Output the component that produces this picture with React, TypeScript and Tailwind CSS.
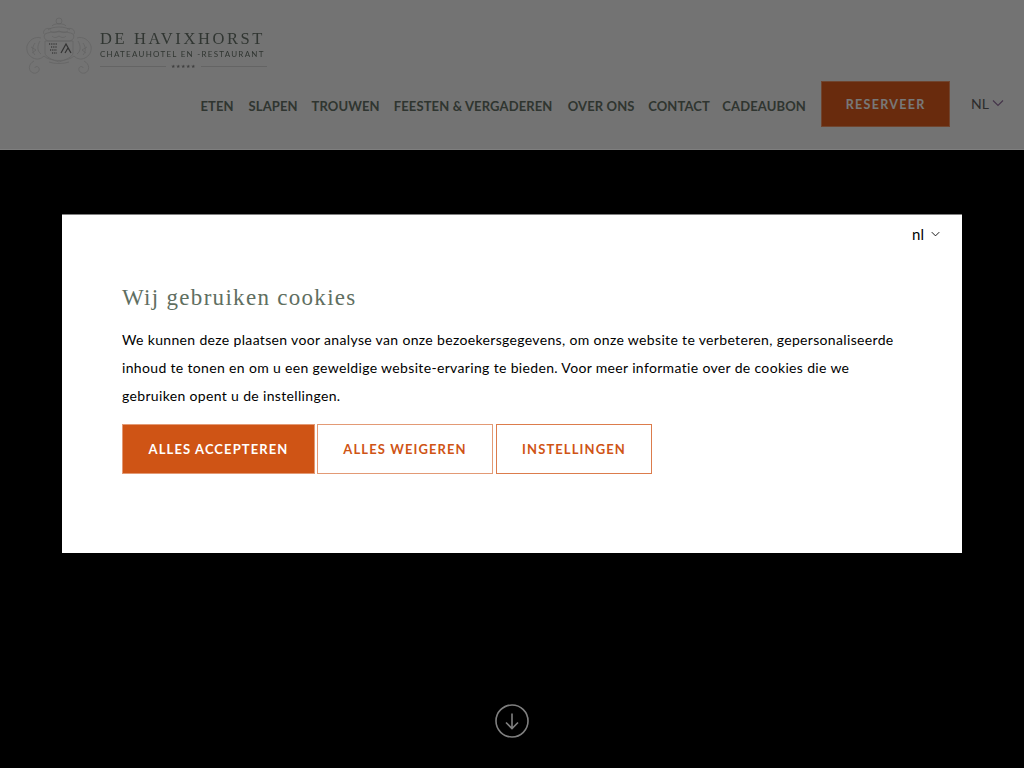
const navItems = [
  { label: 'ETEN', width: 'w-[32px]' },
  { label: 'SLAPEN', width: 'w-[48px]' },
  { label: 'TROUWEN', width: 'w-[65px]' },
  { label: 'FEESTEN & VERGADEREN', width: 'w-[158px]' },
  { label: 'OVER ONS', width: 'w-[66px]' },
  { label: 'CONTACT', width: 'w-[58px]' },
  { label: 'CADEAUBON', width: 'w-[80px]' },
]

function Crest() {
  return (
    <svg width="70" height="58" viewBox="0 0 70 58" fill="none" stroke="#c4c4c4" strokeWidth="0.7" className="shrink-0">
      <circle cx="34" cy="4" r="3" />
      <path d="M27 9c2-3 12-3 14 0M23 13c4-4 18-4 22 0M19 17c-2-4 3-7 7-5M49 17c2-4-3-7-7-5" />
      <path d="M20 17c5-3 23-3 28 0 2 3 0 6-3 7H23c-3-1-5-4-3-7z" />
      <path d="M25 14c3 2 5 2 9 0 4 2 6 2 9 0M27 19c2 2 4 2 7 0 3 2 5 2 7 0" />
      <path d="M16 21c-6-2-12 2-14 8-1 6 2 10 6 12 4 2 8 1 11-2" />
      <path d="M52 21c6-2 12 2 14 8 1 6-2 10-6 12-4 2-8 1-11-2" />
      <path d="M10 26c-3 4-3 9 0 12M58 26c3 4 3 9 0 12M15 24c-3 5-3 10 1 13M53 24c3 5 3 10-1 13M6 30l5 3-4 3M62 30l-5 3 4 3" />
      <path d="M19 39c6 6 24 6 30 0M24 45c5 2 15 2 20 0" />
      <path d="M9 44c-6 3-6 10-1 12 4 1 7-2 6-5-1-2-4-2-4 0" />
      <path d="M59 44c6 3 6 10 1 12-4 1-7-2-6-5 1-2 4-2 4 0" />
      <path d="M20 24h28v12c0 4-8 7-14 9-6-2-14-5-14-9z" />
      <path d="M24 27h8M26 30h6M25 33h7M27 36h5" stroke="#7a7a7a" strokeWidth="1.4" strokeDasharray="1.2 1" />
      <path d="M36 36l5-9 5 9M40 36l3-5 3 5" stroke="#666666" strokeWidth="1.2" />
    </svg>
  )
}

function Logo() {
  return (
    <div className="flex items-start gap-[5px]">
      <Crest />
      <div className="flex w-[167px] flex-col pt-[14px] blur-[0.3px]">
        <span className="whitespace-nowrap font-['Liberation_Serif',serif] text-[16.5px] leading-[16px] tracking-[2.6px] text-[#626c64]">
          DE HAVIXHORST
        </span>
        <span className="mt-[2px] whitespace-nowrap font-['Lato',sans-serif] text-[8px] leading-[11px] tracking-[1.26px] text-[#626c64]">
          CHATEAUHOTEL EN -RESTAURANT
        </span>
        <div className="mt-[2px] flex items-center gap-[5px]">
          <div className="h-px flex-1 bg-[#c8c8c8]" />
          <span className="text-[5px] leading-[8px] tracking-[0.9px] text-[#808080]">★★★★★</span>
          <div className="h-px flex-1 bg-[#c8c8c8]" />
        </div>
      </div>
    </div>
  )
}

function Chevron({ className }: { className: string }) {
  return (
    <svg viewBox="0 0 12 8" fill="none" stroke="currentColor" strokeWidth="1.2" className={className}>
      <path d="M1 1.5l5 5 5-5" />
    </svg>
  )
}

export default function App() {
  return (
    <div className="relative flex h-[768px] w-[1024px] flex-col overflow-hidden bg-black font-['Lato',sans-serif]">
      <header className="flex h-[150px] shrink-0 flex-col border-b border-white bg-[#e6e6e6] pl-[25px] pr-[20px] pt-[17px]">
        <Logo />
        <nav className="mt-[6px] flex items-center justify-end">
          <div className="mt-[3px] flex items-center gap-[16px]">
            {navItems.map((item) => (
              <a
                key={item.label}
                className={`${item.width} flex justify-center whitespace-nowrap text-[13px] font-bold leading-[20px] tracking-[0.12px] text-[#5f6b60]`}
              >
                {item.label}
              </a>
            ))}
          </div>
          <a className="ml-[17px] flex h-[46px] w-[129px] items-center justify-center border border-[#e08a5e] bg-[#d2561a] pt-[2px] text-[12.5px] font-bold tracking-[1.3px] text-[#f0f0f0]">
            RESERVEER
          </a>
          <div className="ml-[21px] flex items-center gap-[3px] text-[#585858]">
            <span className="text-[14px] leading-[20px]">NL</span>
            <Chevron className="mb-[2px] h-[8px] w-[12px] text-[#8a6a94]" />
          </div>
        </nav>
      </header>

      <main className="flex flex-1 items-end justify-center pb-[30px]">
        <svg width="34" height="34" viewBox="0 0 34 34" fill="none" stroke="white" strokeWidth="1.6">
          <circle cx="17" cy="17" r="16" />
          <path d="M17 9.5v15M11 18.5l6 6 6-6" />
        </svg>
      </main>

      <div className="absolute inset-0 flex items-center justify-center bg-black/50">
        <section className="mt-[-1px] flex h-[339px] w-[900px] flex-col border-t border-[#808080] bg-white px-[60px]">
          <div className="mr-[-38px] flex items-center justify-end gap-[6px] pt-[9px] text-black">
            <span className="pr-px text-[15px] leading-[20px]">nl</span>
            <Chevron className="h-[6px] w-[9px]" />
          </div>
          <h2 className="mt-[39px] font-['Liberation_Serif',serif] text-[23px] leading-[30px] tracking-[1.3px] text-[#5f6f61]">
            Wij gebruiken cookies
          </h2>
          <p className="mt-[13px] w-[780px] text-[14px] leading-[28px] tracking-[0.34px] text-black">
            We kunnen deze plaatsen voor analyse van onze bezoekersgegevens, om onze website te verbeteren, gepersonaliseerde inhoud te tonen en om u een geweldige website-ervaring te bieden. Voor meer informatie over de cookies die we gebruiken opent u de instellingen.
          </p>
          <div className="mt-[14px] flex">
            <button className="h-[50px] w-[193px] border border-[#e39a75] bg-[#cf5415] pt-px text-[13px] font-bold tracking-[1.1px] text-white">
              ALLES ACCEPTEREN
            </button>
            <button className="ml-[2px] h-[50px] w-[176px] border border-[#e39a75] bg-white pt-px text-[13px] font-bold tracking-[1.1px] text-[#cf5415]">
              ALLES WEIGEREN
            </button>
            <button className="ml-[3px] h-[50px] w-[156px] border border-[#dc7c4c] bg-white pt-px text-[13px] font-bold tracking-[1.1px] text-[#cf5415]">
              INSTELLINGEN
            </button>
          </div>
        </section>
      </div>
    </div>
  )
}
